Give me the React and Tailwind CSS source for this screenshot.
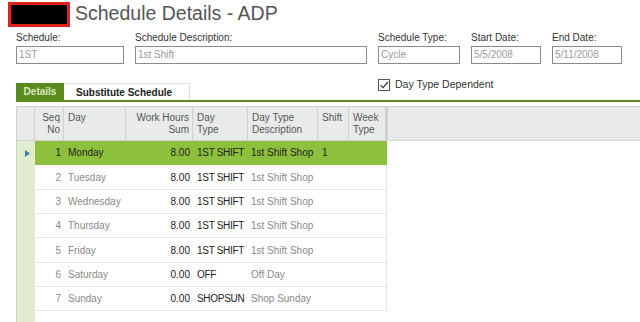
import React from "react";

const COLS = [
    { key: 'seq',  label: ['Seq', 'No'],                 w: 'w-[29px]', align: 'text-right pr-[3px]' },
    { key: 'day',  label: ['Day'],                       w: 'w-[62px]', align: 'text-left pl-[4px]' },
    { key: 'hrs',  label: ['Work Hours', 'Sum'],         w: 'w-[67px]', align: 'text-right pr-[3px]' },
    { key: 'type', label: ['Day', 'Type'],               w: 'w-[55px]', align: 'text-left pl-[4px]' },
    { key: 'desc', label: ['Day Type', 'Description'],   w: 'w-[70px]', align: 'text-left pl-[4px]' },
    { key: 'shift', label: ['Shift'],                    w: 'w-[31px]', align: 'text-left pl-[4px]' },
    { key: 'week', label: ['Week', 'Type'],              w: 'w-[37px]', align: 'text-left pl-[4px]' },
];

const ROWS = [
    { seq: 1, day: 'Monday',    hrs: '8.00', type: '1ST SHIFT', desc: '1st Shift Shop', shift: '1' },
    { seq: 2, day: 'Tuesday',   hrs: '8.00', type: '1ST SHIFT', desc: '1st Shift Shop' },
    { seq: 3, day: 'Wednesday', hrs: '8.00', type: '1ST SHIFT', desc: '1st Shift Shop' },
    { seq: 4, day: 'Thursday',  hrs: '8.00', type: '1ST SHIFT', desc: '1st Shift Shop' },
    { seq: 5, day: 'Friday',    hrs: '8.00', type: '1ST SHIFT', desc: '1st Shift Shop' },
    { seq: 6, day: 'Saturday',  hrs: '0.00', type: 'OFF',       desc: 'Off Day' },
    { seq: 7, day: 'Sunday',    hrs: '0.00', type: 'SHOPSUN',   desc: 'Shop Sunday' },
];

function Field({ label, value, w }) {
    return (
        <div className={`flex flex-col ${w}`}>
            <div className="h-[15px] leading-[13px] text-[#333]">{label}</div>
            <div className="h-[18px] border border-[#8a8a8a] px-[2px] leading-[16px] text-[#9a9a9a]">{value}</div>
        </div>
    );
}

export default function App() {
    return (
        <div className="w-[640px] h-[322px] overflow-hidden bg-white text-[10px] font-['Liberation_Sans',Arial,sans-serif]">
            {/* title */}
            <div className="flex items-center h-[28px] pl-2">
                <div className="w-[62px] h-[25px] border-[3px] border-[#e0211d] bg-black" />
                <div className="ml-[5px] text-[19.5px] leading-none text-[#555]">Schedule Details - ADP</div>
            </div>

            {/* fields */}
            <div className="flex gap-[11px] pl-4 pt-[3px]">
                <Field label="Schedule:" value="1ST" w="w-[108px]" />
                <Field label="Schedule Description:" value="1st Shift" w="w-[232px]" />
                <Field label="Schedule Type:" value="Cycle" w="w-[82px]" />
                <Field label="Start Date:" value="5/5/2008" w="w-[70px]" />
                <Field label="End Date:" value="5/11/2008" w="w-[70px]" />
            </div>

            {/* tabs + checkbox */}
            <div className="flex h-[36px]">
                <div className="flex self-end ml-4 h-[17px]">
                    <div className="w-[48px] bg-[#5b8a1f] text-[#dbeabc] font-bold flex items-center justify-center">Details</div>
                    <div className="w-[126px] border-t border-r border-[#ddd] text-[#222] font-bold flex items-center pl-[12px]">Substitute Schedule</div>
                </div>
                <div className="ml-[188px] mt-[13px] flex items-center self-start">
                    <div className="w-[12px] h-[12px] border border-[#555] flex items-center justify-center">
                        <svg width="10" height="10" viewBox="0 0 10 10">
                            <path d="M1.5 5.2 L4 7.7 L8.8 2" stroke="#333" strokeWidth="1.2" fill="none" />
                        </svg>
                    </div>
                    <span className="ml-[5px] text-[10.5px] text-[#333]">Day Type Dependent</span>
                </div>
            </div>
            <div className="ml-4 h-[2px] bg-[#5b8a1f]" />

            {/* grid */}
            <div className="ml-4 mt-[4px] border-t border-l border-[#cfcfcf]">
                <div className="flex h-[34px] bg-[#e9ebea] border-b border-[#d6d6d6] text-[#555] leading-[12px]">
                    <div className="w-[18px] border-r border-[#d0d0d0]" />
                    {COLS.map(c => (
                        <div key={c.key} className={`${c.w} ${c.align} pt-[5px] border-r border-[#d0d0d0]`}>
                            {c.label.map((l, i) => <div key={i} className="whitespace-nowrap">{l}</div>)}
                        </div>
                    ))}
                    <div className="w-[2px] bg-[#cfcfcf]" />
                    <div className="flex-1" />
                </div>
                <div className="flex h-[181px]">
                    <div className="w-[18px] bg-[#e2ecce]">
                        <div className="h-[24px] flex items-center pl-[8px]">
                            <svg width="5" height="7" viewBox="0 0 5 7">
                                <path d="M0 0 L5 3.5 L0 7 Z" fill="#3a7da8" />
                            </svg>
                        </div>
                    </div>
                    <div className="w-[352px] flex flex-col">
                        {ROWS.map((r, i) => {
                            const sel = i === 0;
                            return (
                                <div key={r.seq} className={`flex items-center ${i % 3 === 1 ? 'h-[25px]' : 'h-[24px]'} border-b border-r ${sel ? 'bg-[#8dc03c] border-[#8dc03c] text-[#222]' : 'border-[#e6e6e6]'}`}>
                                    <div className={`w-[29px] text-right pr-[3px] ${sel ? '' : 'text-[#8a8a8a]'}`}>{r.seq}</div>
                                    <div className={`w-[62px] pl-[4px] ${sel ? '' : 'text-[#8a8a8a]'}`}>{r.day}</div>
                                    <div className="w-[67px] text-right pr-[3px] text-[#222]">{r.hrs}</div>
                                    <div className="w-[55px] pl-[4px] text-[#222] whitespace-nowrap tracking-[-0.3px]">{r.type}</div>
                                    <div className={`w-[70px] pl-[3px] whitespace-nowrap ${sel ? '' : 'text-[#8a8a8a]'}`}>{r.desc}</div>
                                    <div className="w-[31px] pl-[4px]">{r.shift ?? ''}</div>
                                    <div className="w-[37px]" />
                                </div>
                            );
                        })}
                    </div>
                    <div className="flex-1 bg-white" />
                </div>
            </div>
        </div>
    );
}
